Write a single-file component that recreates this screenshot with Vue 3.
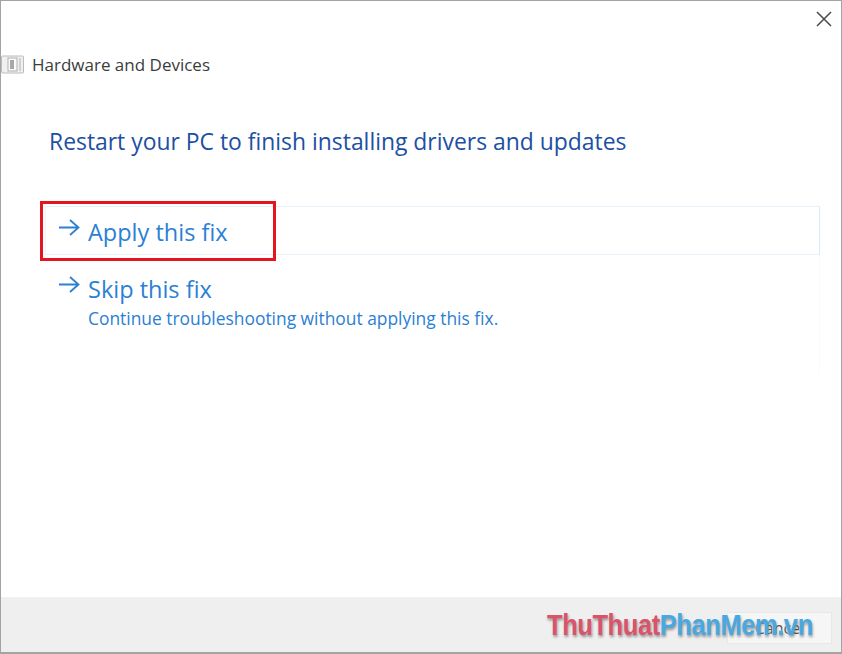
<script setup>
const arrowPath = 'M1 9.5H20M12 2L20.5 9.5L12 17'
</script>

<template>
  <div class="window">
    <div class="content">
      <button class="close" aria-label="Close">
        <svg width="16" height="16" viewBox="0 0 16 16"><path d="M1 1L15 15M15 1L1 15" stroke="#4a4a4a" stroke-width="1.5" fill="none" /></svg>
      </button>
      <div class="titlebar">
        <svg class="app-icon" width="24" height="20" viewBox="0 0 24 20">
          <rect x="0.5" y="1" width="22" height="17" rx="1" fill="#f0f0f0" stroke="#bcbcbc" />
          <rect x="7" y="3" width="9" height="13" fill="#fafafa" stroke="#b0b0b0" />
          <rect x="9" y="5" width="4" height="9" fill="#a8a8a8" />
          <rect x="18" y="3" width="2" height="13" fill="#d0d0d0" />
        </svg>
        <span class="title-text">Hardware and Devices</span>
      </div>
      <h1 class="heading">Restart your PC to finish installing drivers and updates</h1>
      <div class="options">
        <div class="option option-active">
          <svg class="arrow" width="22" height="19" viewBox="0 0 22 19"><path :d="arrowPath" stroke="#2b80d3" stroke-width="1.8" fill="none" /></svg>
          <div class="option-label">Apply this fix</div>
          <div class="highlight"></div>
        </div>
        <div class="option option-plain">
          <svg class="arrow" width="22" height="19" viewBox="0 0 22 19"><path :d="arrowPath" stroke="#2b80d3" stroke-width="1.8" fill="none" /></svg>
          <div>
            <div class="option-label">Skip this fix</div>
            <div class="option-sub">Continue troubleshooting without applying this fix.</div>
          </div>
        </div>
      </div>
    </div>
    <div class="footer">
      <button class="cancel">Cancel</button>
      <div class="watermark"><span class="wm-red">ThuThuat</span><span class="wm-blue">PhanMem.vn</span></div>
    </div>
  </div>
</template>

<style>
html, body { margin: 0; background: #fff; }
</style>

<style scoped>
.window {
  width: 842px;
  height: 654px;
  box-sizing: border-box;
  border: 1px solid #a3a3a3;
  border-width: 1px 1px 2px 1px;
  display: flex;
  flex-direction: column;
  background: #fff;
  font-family: "Open Sans", "Noto Sans", sans-serif;
  overflow: hidden;
}
.content {
  position: relative;
  flex: 1;
  min-height: 0;
}
.close {
  position: absolute;
  top: 10px;
  right: 9px;
  width: 16px;
  height: 16px;
  padding: 0;
  border: 0;
  background: none;
  display: block;
}
.close svg { display: block; }
.titlebar {
  display: flex;
  align-items: center;
  gap: 7px;
  padding-top: 53px;
  height: 22px;
}
.app-icon { flex: none; }
.title-text {
  font-size: 17px;
  color: #3c3c3c;
  line-height: 22px;
}
.heading {
  margin: 50px 0 0 48px;
  font-size: 22.9px;
  font-weight: 400;
  line-height: 32px;
  color: #1d4fa3;
}
.options {
  margin: 48px 0 0 44px;
  width: 775px;
}
.option {
  position: relative;
  display: flex;
  align-items: flex-start;
  gap: 8px;
  padding-left: 12px;
  box-sizing: border-box;
}
.option-active {
  height: 49px;
  padding-top: 9px;
  border: 1px solid #e6f1fa;
  border-right-color: #d8eaf8;
  border-left-color: #edf4fa;
}
.option-plain {
  height: 120px;
  padding-top: 18px;
  padding-left: 13px;
  border-right: 1px solid #fafafa;
}
.arrow { flex: none; margin-top: 2px; }
.option-label {
  font-size: 23.5px;
  line-height: 32px;
  color: #2b80d3;
}
.option-sub {
  font-size: 17.4px;
  line-height: 26px;
  color: #2b80d3;
}
.highlight {
  position: absolute;
  left: -6px;
  top: -6px;
  width: 236px;
  height: 60px;
  box-sizing: border-box;
  border: 3px solid #e3151f;
}
.footer {
  position: relative;
  flex: none;
  height: 54px;
  background: #efefef;
  border-top: 1px solid #f3f0f0;
  display: flex;
  justify-content: flex-end;
  align-items: flex-start;
  padding-right: 9px;
}
.cancel {
  margin-top: 14px;
  width: 105px;
  height: 32px;
  background: #f6f6f6;
  border: 1px solid #e8e8e8;
  font-family: inherit;
  font-size: 16px;
  color: #555;
}
.watermark {
  position: absolute;
  left: 546px;
  top: 9px;
  font-family: "Liberation Sans", sans-serif;
  font-weight: 700;
  font-size: 30px;
  line-height: 36px;
  letter-spacing: -0.5px;
  white-space: nowrap;
  transform: scaleX(0.85);
  transform-origin: left center;
  text-shadow: 1px 2px 3px rgba(0, 0, 0, 0.4), 0 0 2px #fff;
}
.wm-red { color: #d9536b; }
.wm-blue { color: #48a8e2; }
</style>
